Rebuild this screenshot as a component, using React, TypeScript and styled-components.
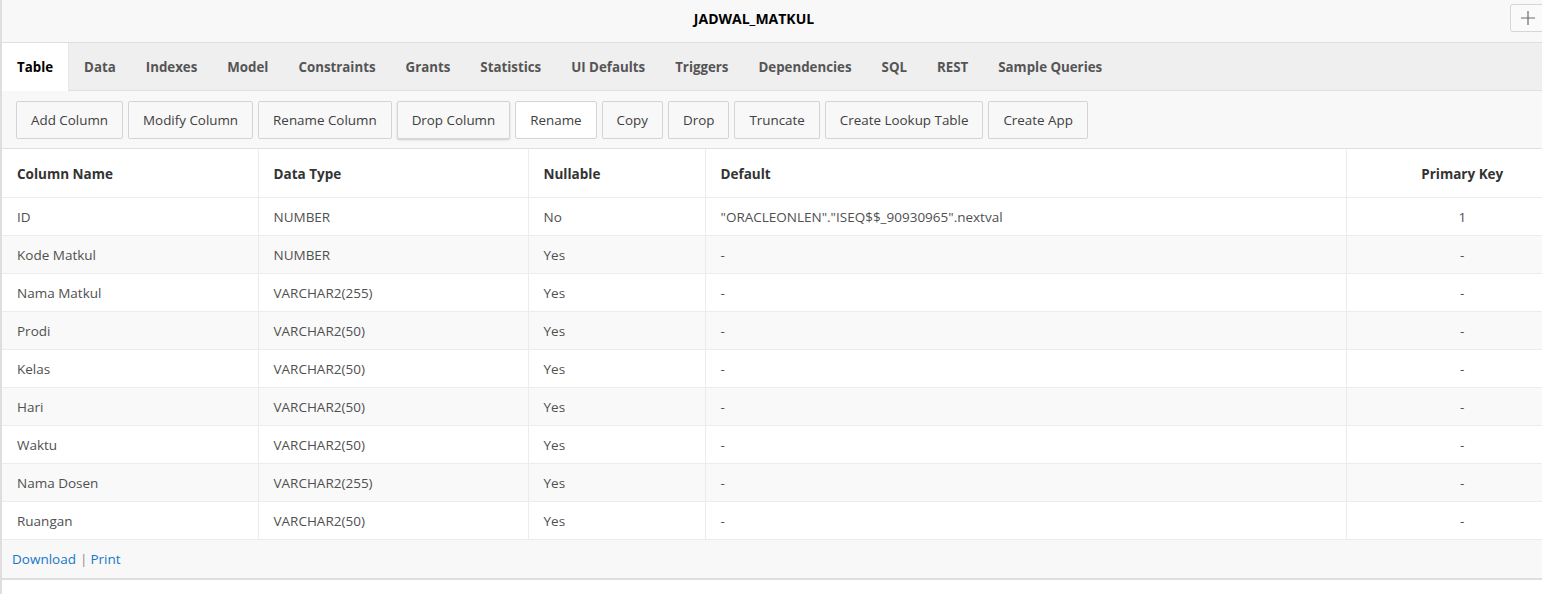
import React from "react";
import styled, { createGlobalStyle } from "styled-components";

const GlobalStyle = createGlobalStyle`
  html, body {
    margin: 0;
    padding: 0;
    background: #ffffff;
    overflow: hidden;
  }
  body {
    font-family: "Open Sans", "Noto Sans", "Liberation Sans", sans-serif;
    font-size: 13.5px;
    color: #404040;
  }
  * { box-sizing: border-box; }
`;

const Page = styled.div`
  width: 1578px;
  border-left: 2px solid #dedede;
  min-height: 594px;
`;

const Header = styled.div`
  display: flex;
  align-items: flex-start;
  height: 42px;
  background: #f8f8f8;
`;

const Title = styled.h1`
  flex: 1;
  margin: 0;
  text-align: center;
  line-height: 37px;
  font-size: 14px;
  font-weight: 700;
  color: #000;
`;

const IconButton = styled.button`
  margin: 4px 32px 0 4px;
  width: 36px;
  height: 28px;
  padding: 0;
  display: flex;
  align-items: center;
  justify-content: center;
  background: #fafafa;
  border: 1px solid #d6d6d6;
  border-radius: 3px;
  cursor: pointer;
`;

const TabBar = styled.div`
  display: flex;
  height: 49px;
  background: #efefef;
  border-top: 1px solid #dfdfdf;
  border-bottom: 1px solid #dfdfdf;
`;

const Tab = styled.div<{ $active?: boolean }>`
  display: flex;
  align-items: center;
  padding: 0 15px;
  font-weight: 700;
  font-size: 13.3px;
  color: ${(p) => (p.$active ? "#000" : "#555")};
  background: ${(p) => (p.$active ? "#fff" : "transparent")};
  border-right: ${(p) => (p.$active ? "1px solid #e6e6e6" : "none")};
  margin-bottom: -1px;
  cursor: pointer;
`;

const Toolbar = styled.div`
  display: flex;
  gap: 5px;
  align-items: center;
  height: 58px;
  padding: 0 14px;
  background: #f8f8f8;
  border-bottom: 1px solid #dfdfdf;
`;

const ToolButton = styled.button<{ $variant?: "hover" | "focus" }>`
  height: 38px;
  padding: 0 14px;
  font-family: inherit;
  font-size: 13.4px;
  color: #404040;
  background: ${(p) => (p.$variant === "hover" ? "#fff" : "#f8f8f8")};
  border: 1px solid #d4d4d4;
  border-radius: 2px;
  box-shadow: ${(p) =>
    p.$variant === "focus" ? "0 1px 2px rgba(0,0,0,0.18)" : "none"};
  cursor: pointer;
`;

const Table = styled.table`
  width: 100%;
  border-collapse: collapse;
  table-layout: fixed;
`;

const HeadCell = styled.th<{ $center?: boolean; $w: number }>`
  width: ${(p) => p.$w}px;
  height: 48px;
  padding: 2px 15px 0;
  text-align: ${(p) => (p.$center ? "center" : "left")};
  font-weight: 700;
  font-size: 13.5px;
  color: #333;
  background: #fff;
  border-right: 1px solid #ececec;
  border-bottom: 1px solid #ececec;
  &:last-child { border-right: none; }
`;

const Row = styled.tr<{ $alt?: boolean }>`
  background: ${(p) => (p.$alt ? "#f9f9f9" : "#fff")};
`;

const Cell = styled.td<{ $center?: boolean }>`
  height: 38px;
  padding: 1px 15px 0;
  text-align: ${(p) => (p.$center ? "center" : "left")};
  color: #505050;
  font-size: 13.5px;
  border-right: 1px solid #ececec;
  border-bottom: 1px solid #ececec;
  white-space: nowrap;
  &:last-child { border-right: none; }
`;

const Footer = styled.div`
  display: flex;
  align-items: center;
  height: 40px;
  padding: 0 10px;
  background: #f8f8f8;
  border-bottom: 2px solid #dedede;
  font-size: 13.5px;
  color: #777;
`;

const Link = styled.a`
  color: #1677c9;
  text-decoration: none;
  cursor: pointer;
`;

const Sep = styled.span`
  margin: 0 3px 0 4px;
  color: #888;
`;

const tabs = [
  "Table",
  "Data",
  "Indexes",
  "Model",
  "Constraints",
  "Grants",
  "Statistics",
  "UI Defaults",
  "Triggers",
  "Dependencies",
  "SQL",
  "REST",
  "Sample Queries",
];

const buttons: { label: string; variant?: "hover" | "focus" }[] = [
  { label: "Add Column" },
  { label: "Modify Column" },
  { label: "Rename Column" },
  { label: "Drop Column", variant: "focus" },
  { label: "Rename", variant: "hover" },
  { label: "Copy" },
  { label: "Drop" },
  { label: "Truncate" },
  { label: "Create Lookup Table" },
  { label: "Create App" },
];

const rows = [
  ["ID", "NUMBER", "No", '"ORACLEONLEN"."ISEQ$$_90930965".nextval', "1"],
  ["Kode Matkul", "NUMBER", "Yes", "-", "-"],
  ["Nama Matkul", "VARCHAR2(255)", "Yes", "-", "-"],
  ["Prodi", "VARCHAR2(50)", "Yes", "-", "-"],
  ["Kelas", "VARCHAR2(50)", "Yes", "-", "-"],
  ["Hari", "VARCHAR2(50)", "Yes", "-", "-"],
  ["Waktu", "VARCHAR2(50)", "Yes", "-", "-"],
  ["Nama Dosen", "VARCHAR2(255)", "Yes", "-", "-"],
  ["Ruangan", "VARCHAR2(50)", "Yes", "-", "-"],
];

export default function App() {
  return (
    <>
      <GlobalStyle />
      <Page>
        <Header>
          <Title>JADWAL_MATKUL</Title>
          <IconButton aria-label="Add">
            <svg width="16" height="16" viewBox="0 0 16 16">
              <path d="M8 1v14M1 8h14" stroke="#6b6b6b" strokeWidth="1.2" fill="none" />
            </svg>
          </IconButton>
        </Header>
        <TabBar>
          {tabs.map((t, i) => (
            <Tab key={t} $active={i === 0}>
              {t}
            </Tab>
          ))}
        </TabBar>
        <Toolbar>
          {buttons.map((b) => (
            <ToolButton key={b.label} $variant={b.variant}>
              {b.label}
            </ToolButton>
          ))}
        </Toolbar>
        <Table>
          <thead>
            <tr>
              <HeadCell $w={256}>Column Name</HeadCell>
              <HeadCell $w={270}>Data Type</HeadCell>
              <HeadCell $w={177}>Nullable</HeadCell>
              <HeadCell $w={641}>Default</HeadCell>
              <HeadCell $w={232} $center>
                Primary Key
              </HeadCell>
            </tr>
          </thead>
          <tbody>
            {rows.map((r, i) => (
              <Row key={r[0]} $alt={i % 2 === 1}>
                <Cell>{r[0]}</Cell>
                <Cell>{r[1]}</Cell>
                <Cell>{r[2]}</Cell>
                <Cell>{r[3]}</Cell>
                <Cell $center>{r[4]}</Cell>
              </Row>
            ))}
          </tbody>
        </Table>
        <Footer>
          <Link>Download</Link>
          <Sep>|</Sep>
          <Link>Print</Link>
        </Footer>
      </Page>
    </>
  );
}
